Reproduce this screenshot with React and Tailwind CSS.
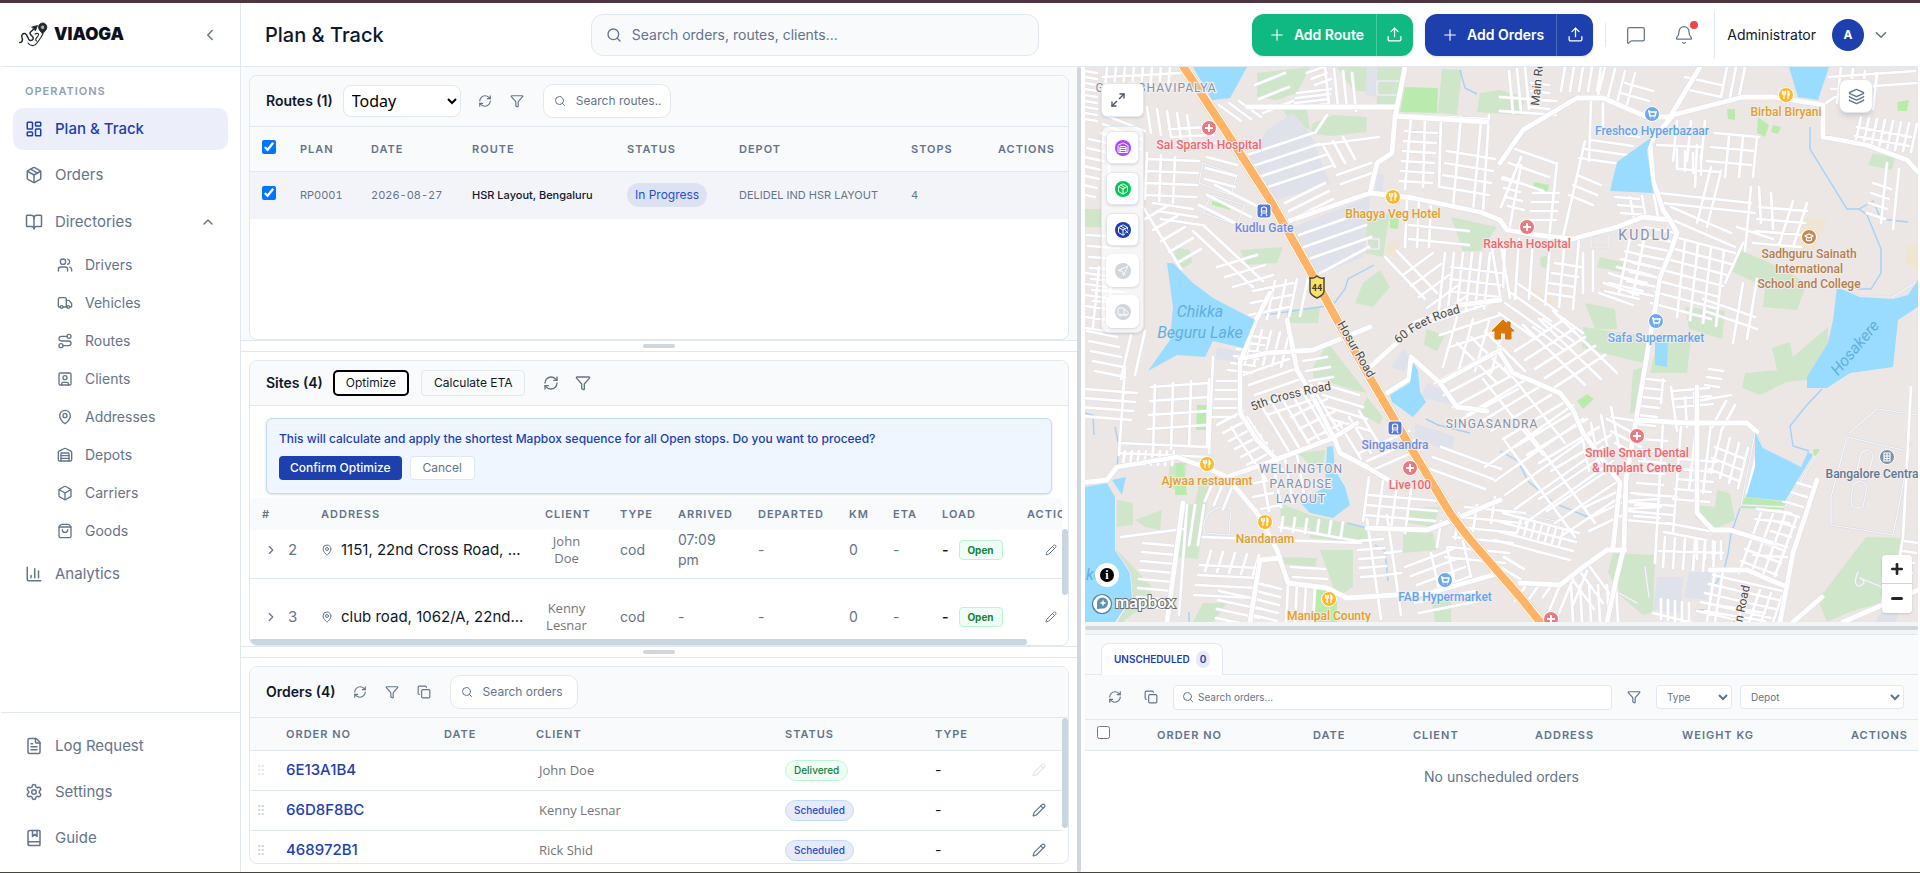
import {
  Bell,
  BookMarked,
  BookOpen,
  Box,
  ChevronDown,
  ChevronLeft,
  ChevronRight,
  ChevronUp,
  Copy,
  FileText,
  Funnel,
  GripVertical,
  Layers,
  LayoutDashboard,
  MapPin,
  Maximize2,
  MessageSquare,
  Navigation,
  Package,
  PackageX,
  Pencil,
  Plus,
  RefreshCw,
  Route,
  Search,
  Settings,
  ShoppingBag,
  SquareUser,
  Truck,
  Upload,
  Users,
  Warehouse,
} from 'lucide-react';

const DIRECTORY_LINKS = [
  { label: 'Drivers', icon: Users },
  { label: 'Vehicles', icon: Truck },
  { label: 'Routes', icon: Route },
  { label: 'Clients', icon: SquareUser },
  { label: 'Addresses', icon: MapPin },
  { label: 'Depots', icon: Warehouse },
  { label: 'Carriers', icon: Box },
  { label: 'Goods', icon: ShoppingBag },
];

const FOOTER_LINKS = [
  { label: 'Log Request', icon: FileText },
  { label: 'Settings', icon: Settings },
  { label: 'Guide', icon: BookMarked },
];

const SITES = [
  {
    seq: 2,
    address: '1151, 22nd Cross Road, ...',
    client: 'John Doe',
    arrived: '07:09 pm',
    cell: 'h-[47px] border-b border-slate-200 pb-2',
  },
  {
    seq: 3,
    address: 'club road, 1062/A, 22nd...',
    client: 'Kenny Lesnar',
    arrived: '-',
    cell: 'h-[76px]',
  },
];

const ORDERS = [
  { no: '6E13A1B4', client: 'John Doe', status: 'Delivered' },
  { no: '66D8F8BC', client: 'Kenny Lesnar', status: 'Scheduled' },
  { no: '468972B1', client: 'Rick Shid', status: 'Scheduled' },
];

const TH = 'px-3 text-left text-[11px] font-semibold uppercase tracking-[1px] text-[#64748b]';

/* ---------- map data ---------- */

const WATER = [
  '108,0 162,0 145,31 127,33',
  '82,196 88,196 108,216 128,231 170,253 158,281 128,274 120,290 92,288 63,304 85,273 88,240',
  '0,420 22,416 30,430 30,483 45,506 47,530 30,555 0,555',
  '27,413 41,410 37,428',
  '328,296 333,303 335,325 341,335 328,350 307,335 305,328 325,316',
  '242,380 248,379 250,403 260,420 265,438 248,451 225,446 215,435 240,420',
  '567,70 562,83 568,126 525,124 532,95',
  '704,0 744,0 733,33 713,30',
  '752,220 775,230 808,232 823,228 833,213 833,240 813,253 808,300 765,306 742,321 722,321 722,310 743,276 748,253',
  '670,365 678,381 716,400 723,385 728,388 700,434 661,430 670,400',
  '570,270 583,273 582,300 570,298',
];

const PARKS = [
  '172,6 225,0 212,26 192,33 172,30',
  '192,36 222,43 225,63 208,56',
  '228,56 248,48 282,50 281,65 245,69 225,66',
  '252,0 282,0 288,26 268,23',
  '292,0 317,0 312,37 292,37',
  '357,2 377,3 372,48 353,46',
  '395,26 415,23 440,30 436,48 392,45',
  '282,150 305,146 298,190 280,186',
  '278,216 295,203 305,220 288,240 270,236',
  '366,150 412,160 395,184 378,184',
  '155,183 198,180 192,196 162,198',
  '88,180 105,183 107,196 95,203',
  '0,142 16,142 16,160 0,160',
  '202,243 235,240 233,256 202,256',
  '243,276 282,326 268,323 228,310 228,300',
  '282,330 298,350 295,358 275,346',
  '341,262 360,268 352,284 339,278',
  '212,386 240,383 238,403 228,400',
  '85,396 102,396 98,425 82,420',
  '115,413 125,416 113,492 93,490 98,440 110,436',
  '195,436 225,448 225,461 196,458',
  '225,448 282,461 283,476 225,471',
  '32,433 48,436 48,458 32,460',
  '50,453 77,443 75,463 60,460',
  '32,483 67,520 65,533 38,555 30,555 47,530',
  '235,483 268,483 268,520 252,530',
  '198,490 232,491 230,500 198,497',
  '325,441 355,440 348,460 323,456',
  '318,463 348,466 352,483 318,486',
  '118,536 142,536 128,555 108,555',
  '346,530 366,532 366,555 350,555',
  '515,190 542,196 540,206 512,200',
  '455,190 467,188 463,202 456,200',
  '655,183 685,196 722,216 712,243 678,240 680,220 643,203',
  '788,86 810,91 807,103 783,98',
  '498,260 565,270 558,296 497,281',
  '500,236 530,242 532,262 510,262',
  '575,266 606,273 602,306 565,306',
  '600,240 640,244 637,272 604,262',
  '548,303 558,300 550,346 545,346',
  '687,281 705,275 708,290 743,260 743,276 722,313 702,315 675,328 657,321 660,306 692,303',
  '632,423 645,426 650,453 628,463 610,450 609,438 630,440',
  '528,486 570,488 568,546 558,548 532,526 523,505',
  '781,470 818,471 816,486 795,536 762,546 742,555 733,533',
];

const GARDENS = [
  '320,20 353,21 352,46 315,45',
  '112,338 128,338 127,363 111,363',
  '91,396 98,396 102,428 90,428',
  '230,523 252,523 252,555 227,555',
  '660,430 702,435 698,443 655,441',
  '492,334 502,327 509,332 498,342',
  '673,50 684,58 680,70 672,66',
  '642,42 650,42 650,53 643,52',
  '688,58 696,60 693,67 686,65',
  '449,115 464,118 463,124 448,122',
  '305,151 314,151 313,162 305,161',
  '728,382 735,382 729,392',
  '812,35 824,33 822,44 813,44',
  '127,134 146,139 145,143 127,138',
];

const CAMPUSES = [
  '208,46 225,66 245,116 192,133 162,93 182,63',
  '208,160 285,130 278,190 228,210',
  '282,0 292,0 291,30 280,28',
  '292,107 299,107 297,128 290,126',
  '132,280 165,286 162,296 130,292',
  '318,282 325,290 320,305 306,300',
  '342,316 370,330 366,338 336,330',
  '330,356 370,370 366,386 330,370',
  '572,510 598,510 596,546 568,543',
  '604,505 627,505 622,533 599,530',
  '800,540 820,534 810,555 790,555',
];

const SANDS = [
  '717,150 742,153 728,186 708,181',
  '228,0 244,2 240,10 226,6',
  '304,174 315,174 312,190 301,186',
  '445,222 469,232 467,240 443,232',
  '822,180 833,175 833,205 820,195',
  '368,434 380,434 374,440',
];

const STREAMS = [
  'M725 60v22l37 60h12l14-8 8 18 27 3',
  'M774 142l8 6 14 34v24l-10 16h-12l-20-6',
  'M737 322l-16 17-16 20 3 20 16 5',
  'M655 441l-9 26-3 20-4 16-12 20-4 20h-13',
  'M30 360l4 20-2 20',
  'M0 346l8 2 1 20',
  'M180 248l68-10 12-16 3-10 26-14',
  'M415 384l18 10 10 20 26 22 34 14',
  'M262 456l20 5M290 478l10 6 3 30',
  'M104 545v10M375 3l5 18 12 6',
  'M341 352l12 6 32 8',
];

// [x, y, dx, dy, count, stepX, stepY]: a run of parallel streets
const STREETS = [
  [0, 4, 12, 2, 9, 0, 6],
  [18, 10, 78, -4, 2, 2, 14],
  [22, 0, -2, 22, 8, 9, 0],
  [20, 48, 40, 16, 3, -2, 9],
  [62, 40, 4, 26, 5, 10, 2],
  [84, 62, 40, -2, 3, 4, 8],
  [134, 38, 22, 16, 3, 10, -2],
  [4, 72, 18, 4, 7, -2, 9],
  [22, 66, 4, 70, 1, 0, 0],
  [62, 86, -2, 46, 3, 14, 2],
  [62, 92, 52, 2, 4, -1, 12],
  [68, 136, 40, 6, 3, 4, 8],
  [2, 168, 32, 2, 7, 1, 11],
  [58, 140, 38, 62, 1, 0, 0],
  [60, 152, 24, -14, 5, 8, 11],
  [118, 158, 60, 56, 2, -10, 6],
  [130, 118, 44, 22, 3, -8, 10],
  [122, 90, 30, 8, 3, -1, 11],
  [132, 200, 40, -12, 3, 8, 10],
  [168, 224, 40, -8, 3, -2, 12],
  [190, 214, -8, 38, 4, 11, -1],
  [0, 206, 22, 3, 6, 0, 11],
  [14, 200, -6, 60, 2, 14, 0],
  [2, 264, 30, 6, 5, 2, 10],
  [46, 268, -10, 44, 2, 14, -4],
  [0, 322, 52, 4, 4, -2, 9],
  [40, 300, -6, 88, 1, 0, 0],
  [66, 320, 58, -4, 4, -1, 14],
  [70, 318, -2, 66, 4, 18, -2],
  [34, 376, 88, 4, 2, 0, 10],
  [40, 384, -2, 14, 8, 7, 0],
  [128, 290, -4, 96, 1, 0, 0],
  [132, 314, 22, 0, 5, -1, 9],
  [158, 268, 24, 3, 6, -3, 7],
  [168, 262, -8, 34, 5, 9, 1],
  [158, 308, 46, -16, 5, 6, 10],
  [132, 358, 26, -14, 6, 6, 8],
  [162, 350, 36, 54, 2, -16, 10],
  [176, 338, 30, 50, 6, 10, -4],
  [206, 350, 36, -18, 3, 8, 12],
  [218, 294, 24, -4, 3, 3, 10],
  [234, 316, 40, 12, 4, 4, 12],
  [254, 356, 22, 36, 3, 10, -6],
  [274, 386, 50, -22, 3, 8, 8],
  [284, 410, -6, 44, 4, 14, 4],
  [284, 428, 70, 6, 3, -2, 10],
  [148, 418, -10, 24, 3, -9, -4],
  [160, 418, 20, -4, 3, 8, 12],
  [176, 400, 8, 44, 4, 12, -4],
  [194, 460, 78, 14, 1, 0, 0],
  [196, 464, 2, -14, 6, 12, 1],
  [118, 470, 158, 6, 1, 0, 0],
  [36, 470, 62, -8, 1, 0, 0],
  [58, 476, 34, 3, 8, -1, 9],
  [102, 438, -8, 110, 1, 0, 0],
  [110, 438, -6, 40, 2, 9, 0],
  [115, 498, 60, 3, 4, -2, 10],
  [126, 484, -6, 20, 5, 12, 1],
  [134, 524, 42, 9, 4, -1, 9],
  [172, 516, 24, 6, 5, -1, 8],
  [203, 518, -2, 38, 4, 9, 0],
  [206, 500, 34, 2, 2, 2, 10],
  [272, 474, 26, -2, 5, 1, 9],
  [282, 452, 14, 100, 2, 20, -4],
  [300, 486, 16, -2, 3, 0, 22],
  [320, 500, 48, -18, 4, 6, 9],
  [346, 486, 8, 36, 3, 16, -6],
  [330, 536, 60, -12, 2, 4, 10],
  [356, 454, -4, 26, 4, 18, -8],
  [380, 440, 60, 6, 6, -4, 10],
  [340, 400, 60, 22, 3, 8, -10],
  [170, 18, 30, -12, 3, 4, 14],
  [212, 26, 34, -4, 4, -1, 5],
  [240, 0, 4, 38, 4, 9, 2],
  [222, 6, 16, -6, 3, 4, 6],
  [230, 66, 12, -18, 1, 0, 0],
  [232, 78, 62, -8, 1, 0, 0],
  [162, 88, 66, -22, 4, 6, 11],
  [238, 78, 12, 22, 3, 10, -4],
  [252, 108, 34, -12, 2, 4, 9],
  [200, 136, 40, -20, 3, 4, 8],
  [214, 168, 62, -22, 3, 5, 12],
  [228, 210, 56, -30, 1, 0, 0],
  [320, 64, 32, 2, 6, -1, 10],
  [326, 50, -6, 72, 1, 0, 0],
  [340, 50, -2, 70, 2, 16, 0],
  [316, 48, 88, 4, 1, 0, 0],
  [376, 50, -8, 90, 2, 20, 4],
  [362, 84, 48, 8, 4, -2, 12],
  [404, 48, -6, 96, 1, 0, 0],
  [322, 134, -2, 46, 3, 12, 0],
  [324, 158, 60, 6, 2, 0, 14],
  [300, 190, 40, 42, 2, 12, -6],
  [318, 208, 30, -22, 5, 8, 11],
  [360, 186, -6, 56, 6, 9, 0],
  [366, 200, 50, 6, 3, -1, 12],
  [406, 176, 10, 58, 2, 9, -3],
  [345, 256, 60, -20, 3, 10, 12],
  [372, 250, -14, 50, 4, 16, 2],
  [372, 276, 40, 40, 3, 14, -6],
  [350, 316, 56, -30, 4, 9, 12],
  [382, 348, 60, -36, 8, 12, 8],
  [420, 300, 60, 76, 2, -22, 12],
  [438, 258, 62, 60, 3, 16, -6],
  [430, 284, 50, -32, 5, 10, 9],
  [468, 244, 30, 22, 3, -10, 8],
  [400, 400, 88, -62, 5, 10, 14],
  [440, 360, 70, 96, 2, -20, 14],
  [454, 432, 60, -40, 4, 8, 12],
  [418, 446, 76, 20, 4, -3, 9],
  [436, 452, -4, 14, 7, 7, 2],
  [500, 440, 34, -16, 3, 2, 12],
  [474, 520, -14, 34, 3, 14, -8],
  [486, 518, 2, 36, 6, 9, 0],
  [505, 500, 22, 30, 3, -9, 6],
  [415, 30, 56, 4, 2, 0, 14],
  [440, 0, 4, 42, 3, -8, 2],
  [446, 16, 18, 2, 4, 0, 8],
  [480, 0, -4, 24, 5, 9, 0],
  [520, 0, -8, 32, 4, 10, 2],
  [536, 26, 28, 8, 2, 4, -10],
  [506, 34, -2, 60, 1, 0, 0],
  [518, 36, 0, 26, 1, 0, 0],
  [512, 64, 42, 6, 4, -6, 9],
  [430, 82, 40, 14, 3, -6, 14],
  [472, 96, -8, 76, 1, 0, 0],
  [500, 74, -22, 96, 1, 0, 0],
  [492, 108, 24, 10, 3, -4, 10],
  [448, 126, 26, 0, 4, -1, 9],
  [417, 112, 16, 4, 4, 2, 9],
  [416, 140, 20, -50, 1, 0, 0],
  [436, 98, -12, 66, 1, 0, 0],
  [530, 130, 24, 2, 3, 3, 8],
  [545, 130, 4, 22, 3, 12, -1],
  [572, 78, 44, 2, 1, 0, 0],
  [592, 82, 0, 20, 4, 8, 2],
  [594, 102, 42, 3, 1, 0, 0],
  [636, 104, -14, 56, 2, -10, -4],
  [574, 126, 92, 10, 2, 4, 10],
  [612, 78, -2, 42, 1, 0, 0],
  [586, 140, 60, 26, 2, 4, 14],
  [666, 120, -6, 64, 1, 0, 0],
  [674, 140, 48, 4, 4, -2, 12],
  [674, 120, 2, 36, 2, 12, 6],
  [722, 136, -14, 44, 2, -14, -2],
  [642, 0, -6, 30, 3, 9, 0],
  [600, 10, 36, 8, 2, 0, 12],
  [592, 54, -4, 40, 3, 14, 0],
  [622, 94, 44, 4, 3, 4, -14],
  [644, 70, -4, 40, 3, 14, 0],
  [744, 10, 86, -6, 2, 2, 12],
  [756, 0, -4, 36, 4, 12, 2],
  [776, 50, -6, 28, 8, 8, 1],
  [772, 60, 54, 10, 2, -2, 9],
  [802, 96, -6, 60, 2, 12, 6],
  [788, 116, 18, 6, 4, -2, 10],
  [738, 38, 12, -8, 1, 0, 0],
  [560, 160, 30, 6, 8, -3, 9],
  [546, 166, -12, 60, 2, 14, 2],
  [540, 184, 34, 8, 6, -4, 8],
  [524, 206, 34, 12, 3, -5, 10],
  [494, 172, -6, 70, 3, -14, -2],
  [470, 196, 26, 4, 4, -3, 10],
  [508, 184, 0, 40, 2, -10, 2],
  [420, 176, -2, 44, 1, 0, 0],
  [434, 172, -4, 60, 2, 14, 0],
  [432, 216, 40, 28, 4, -6, 10],
  [590, 170, 60, 16, 7, -4, 11],
  [600, 174, -8, 76, 4, 13, 3],
  [652, 160, 36, 12, 1, 0, 0],
  [658, 176, -18, 40, 1, 0, 0],
  [618, 232, 52, 18, 2, 2, 12],
  [672, 212, -10, 60, 2, -14, 4],
  [562, 312, 18, 2, 6, -2, 9],
  [578, 312, -2, 24, 1, 0, 0],
  [588, 324, 36, -3, 3, 2, 8],
  [586, 320, 6, 44, 1, 0, 0],
  [600, 330, 2, 30, 2, 9, -4],
  [624, 302, 14, 2, 3, -2, 8],
  [612, 334, 34, -6, 1, 0, 0],
  [650, 338, -14, 26, 2, -9, -4],
  [552, 354, -26, -4, 1, 0, 0],
  [526, 340, 8, 40, 4, -10, 8],
  [522, 352, 30, 16, 3, 4, 12],
  [556, 372, 26, 2, 8, -1, 11],
  [578, 356, -8, 140, 1, 0, 0],
  [596, 360, -8, 106, 1, 0, 0],
  [626, 356, -8, 70, 2, -14, -3],
  [596, 392, 36, 3, 5, -2, 10],
  [636, 366, -10, 40, 5, 9, 5],
  [630, 380, 30, 12, 3, -3, 11],
  [546, 426, 46, 4, 4, -2, 9],
  [582, 456, 42, 8, 2, -3, 9],
  [574, 484, 64, 2, 1, 0, 0],
  [580, 470, -2, 30, 6, 10, 1],
  [612, 474, 0, 18, 4, 8, 0],
  [540, 434, 34, -2, 2, 0, 8],
  [672, 442, 34, 4, 2, -2, 10],
  [676, 446, -22, 60, 4, 12, 1],
  [664, 470, 36, 14, 3, -4, 12],
  [706, 414, 20, 6, 7, -4, 10],
  [668, 488, 34, 2, 1, 0, 0],
  [628, 508, 70, 16, 5, -4, 9],
  [630, 504, -8, 50, 2, 8, 0],
  [664, 520, -12, 35, 4, 11, 3],
  [604, 536, 0, 20, 5, -7, -1],
  [620, 544, 60, 10, 2, 0, -8],
  [568, 546, 40, 10, 1, 0, 0],
  [820, 474, 13, 2, 4, -2, 10],
  [818, 470, -10, 60, 1, 0, 0],
  [826, 320, -8, 150, 1, 0, 0],
  [415, 500, 20, 12, 2, 4, -10],
  [440, 520, -10, 14, 3, 14, -2],
];

const AVENUES = [
  'M198 156l87-30 43 5 67 14 20 8 7 10 30 5 35 4 45-12 26-10 27 3 7 13-7 20-10 24-5 33-2 10-17 100-10 60-2 67-8 33-9 42',
  'M320 0l-10 50-3 36-15 10-7 30',
  'M162 40h148M310 49l92 6',
  'M415 96l23-33 54-32h26l44 19h23l30-50',
  'M588 48l70-18h30l50 8v32l44 8 40 15 11 12',
  'M588 48l-23 28 3 37 10 30 7 10',
  'M-5 416l27-3 10-13 60-10 30 11 20 9 40-14 66-25 24-15',
  'M185 226l-15 29-15 41v50l17 27 20 20',
  'M202 253l10 50 16 27 22 43 5 13 27 14 33 20',
  'M142 410l30 36 20 37 11 33 39 5 20 10 83-5 70-20',
  'M285 300l30-27 15-17 45-18 40-5',
  'M155 292l27-6 46-3 57-23',
  'M302 326l22-14 2-22 29 26 17 24 30 4M355 316l60-33',
  'M415 286l13 20 47 20 13 17 10 23 20 27 17 23-7 64',
  'M282 461l60 2 26-10 47-20',
  'M435 516l40 2 23-18 24-17h18',
  'M612 320v126l16 17h17l42 13',
  'M552 353l50 3h60l10 9',
  'M732 413l-24 73-13 69',
  'M98 436L82 555M195 491l-20 2-10 62',
  'M625 503h37l40 17M708 555l29-25',
  'M758 555l75-32',
];

const LANES = [
  'M118 96l34 12-6 20-32-12z',
  'M126 128l34 10-8 20-34-12z',
  'M124 446q12-10 22-4l-2 26-24-2q-4-10 4-20z',
  'M292 14h24v14h-24z',
  'M282 172h12v10h-12z',
  'M506 168h18v12h-18z',
  'M766 366h-2l28-24 41 6M762 370l60 14M762 370l-16 60v28l62 10 18-90',
  'M776 386q10-8 12 4l-6 22q-10 2-10-8zM768 418q10-8 14 2l-4 20q-12 4-12-6z',
  'M670 366l10 18 36 16 8-14 6 4-30 50-44-2z',
  'M752 220l23 10h33l25-16',
  'M30 430v53l15 23 2 24-16 25',
  'M773 505q-6 14 2 14 8-4 0-8l24 10-4 20',
  'M560 500l4 30M534 526l18 10M430 445l44 10v6l-44-10z',
];

const HIGHWAY =
  'M96 -4L142 66L185 133L232 216L252 253L288 316L323 376L365 446Q378 464 388 476L435 530L459 560';

function streetPath() {
  const parts = [];
  for (const [x, y, dx, dy, count, sx, sy] of STREETS) {
    for (let i = 0; i < count; i += 1) {
      parts.push(`M${x + i * sx} ${y + i * sy}l${dx} ${dy}`);
    }
  }
  return parts.join('');
}

const POIS = [
  { kind: 'hospital', x: 124, y: 61, lines: ['Sai Sparsh Hospital'] },
  { kind: 'hospital', x: 442, y: 160, lines: ['Raksha Hospital'] },
  { kind: 'hospital', x: 325, y: 401, lines: ['Live100'] },
  { kind: 'hospital', x: 552, y: 369, lines: ['Smile Smart Dental', '& Implant Centre'] },
  { kind: 'hospital', x: 466, y: 552, lines: [] },
  { kind: 'metro', x: 179, y: 144, lines: ['Kudlu Gate'] },
  { kind: 'metro', x: 310, y: 361, lines: ['Singasandra'] },
  { kind: 'food', x: 308, y: 130, lines: ['Bhagya Veg Hotel'] },
  { kind: 'food', x: 122, y: 397, lines: ['Ajwaa restaurant'] },
  { kind: 'food', x: 180, y: 455, lines: ['Nandanam'] },
  { kind: 'food', x: 244, y: 532, lines: ['Manipal County'] },
  { kind: 'food', x: 701, y: 28, lines: ['Birbal Biryani'] },
  { kind: 'shop', x: 360, y: 513, lines: ['FAB Hypermarket'] },
  { kind: 'shop', x: 567, y: 47, lines: ['Freshco Hyperbazaar'] },
  { kind: 'shop', x: 571, y: 254, lines: ['Safa Supermarket'] },
  {
    kind: 'school',
    x: 724,
    y: 170,
    lines: ['Sadhguru Sainath', 'International', 'School and College'],
  },
  { kind: 'office', x: 802, y: 390, labelX: 787, lines: ['Bangalore Centra'] },
];

const POI_COLORS = {
  hospital: { icon: '#ea7a80', text: '#ee6870' },
  metro: { icon: '#5779d8', text: '#6f8be6' },
  food: { icon: '#fdb92e', text: '#dfa02c' },
  shop: { icon: '#6caaf0', text: '#62a4ee' },
  school: { icon: '#c68a50', text: '#b47f4d' },
  office: { icon: '#7d93ab', text: '#5f7894' },
};

const POI_GLYPHS = {
  hospital: <path d="M0 -4V4M-4 0H4" strokeWidth="2" />,
  metro: <path d="M-2.5 2V-2Q-2.5 -4 0 -4T2.5 -2V2ZM-2.5 0H2.5M-2 3L-3 5M2 3L3 5" />,
  food: <path d="M-2 -4V4M-3.5 -4V-1H-0.5V-4M2 4V-4Q3.5 -3 3.2 0H2" />,
  shop: <path d="M-4 -3H-3L-2 2H3L4 -2H-2.5M-1.5 4H-1M2 4H2.5" strokeWidth="1.6" />,
  school: <path d="M-4 -1L0 -3L4 -1L0 1ZM-2.5 0.5V3Q0 4.500 2.500 3V0.500" />,
  office: <path d="M-3 -4H3V4H-3ZM0 -4V4M-3 -1H3M-3 1.500H3" />,
};

function Poi({ poi }) {
  const colors = POI_COLORS[poi.kind];
  return (
    <g>
      {poi.kind === 'metro' ? (
        <rect x={poi.x - 7} y={poi.y - 7} width="14" height="14" rx="3" fill={colors.icon} stroke="#fff" />
      ) : (
        <circle cx={poi.x} cy={poi.y} r="7.5" fill={colors.icon} stroke="#fff" />
      )}
      <g transform={`translate(${poi.x} ${poi.y})`} fill="none" stroke="#fff" strokeWidth="1.2">
        {POI_GLYPHS[poi.kind]}
      </g>
      {poi.lines.map((line, i) => (
        <text
          key={line}
          x={poi.labelX ?? poi.x}
          y={poi.y + 21 + i * 15}
          textAnchor="middle"
          fontSize="12"
          fontWeight="500"
          fill={colors.text}
          stroke="#f1eceb"
          strokeWidth="2"
          strokeLinejoin="round"
          style={{ paintOrder: 'stroke' }}
        >
          {line}
        </text>
      ))}
    </g>
  );
}

function CityMap() {
  const streets = streetPath();
  return (
    <svg
      viewBox="0 0 833 555"
      preserveAspectRatio="xMidYMid slice"
      className="absolute inset-0 h-full w-full font-['Roboto',sans-serif]"
      role="img"
      aria-label="Map of south Bengaluru"
    >
      <rect width="833" height="555" fill="#ece7e5" />
      {PARKS.map((p) => (
        <polygon key={p} points={p} fill="#d0e6cb" />
      ))}
      {GARDENS.map((p) => (
        <polygon key={p} points={p} fill="#baebad" />
      ))}
      {CAMPUSES.map((p) => (
        <polygon key={p} points={p} fill="#dfe1eb" />
      ))}
      {SANDS.map((p) => (
        <polygon key={p} points={p} fill="#f0e5d2" />
      ))}
      <g fill="none" stroke="#a5d1f8" strokeWidth="1.4">
        {STREAMS.map((d) => (
          <path key={d} d={d} />
        ))}
      </g>
      <g fill="none" strokeLinecap="round" strokeLinejoin="round">
        <path d={streets} stroke="#dfe0ea" strokeWidth="3.600" />
        <path d={LANES.join('')} stroke="#d9dbe6" strokeWidth="2.400" />
        <path d={streets} stroke="#fff" strokeWidth="2.700" />
        <path d={LANES.join('')} stroke="#f8f7f7" strokeWidth="1.200" />
      </g>
      <g fill="none" strokeLinecap="round" strokeLinejoin="round">
        <path d={AVENUES.join('')} stroke="#dcdde8" strokeWidth="5.700" />
        <path d={AVENUES.join('')} stroke="#fff" strokeWidth="4.800" />
      </g>
      {WATER.map((p) => (
        <polygon key={p} points={p} fill="#9adcff" />
      ))}
      <g fill="none" strokeLinejoin="round">
        <path d={HIGHWAY} stroke="#e3d9b4" strokeWidth="11" />
        <path d={HIGHWAY} stroke="#fff" strokeWidth="10" />
        <path d={HIGHWAY} stroke="#ffb366" strokeWidth="8" />
      </g>

      <g stroke="#f3efed" strokeWidth="2.500" strokeLinejoin="round" style={{ paintOrder: 'stroke' }}>
        <g fill="#8492b4" fontSize="12" textAnchor="middle" letterSpacing="1">
          <text x="71" y="25">GARVEBHAVIPALYA</text>
          <text x="560" y="173" fontSize="14" letterSpacing="2">KUDLU</text>
          <text x="407" y="361">SINGASANDRA</text>
          <text x="216" y="406">WELLINGTON</text>
          <text x="216" y="421">PARADISE</text>
          <text x="216" y="436">LAYOUT</text>
        </g>
        <g fill="#4a4a4a" fontSize="12">
          <text transform="translate(252 257) rotate(60)">Hosur Road</text>
          <path id="sixty-feet" d="M314 277Q336 254 390 242" fill="none" stroke="none" />
          <text>
            <textPath href="#sixty-feet">60 Feet Road</textPath>
          </text>
          <path id="fifth-cross" d="M168 344Q200 330 262 320" fill="none" stroke="none" />
          <text>
            <textPath href="#fifth-cross">5th Cross Road</textPath>
          </text>
          <text transform="translate(454 39) rotate(-84)">Main Road</text>
          <text transform="translate(653 575) rotate(-78)">Main Road</text>
        </g>
      </g>

      <g fill="#5fb0e0" fontSize="16" fontStyle="italic" textAnchor="middle">
        <text x="115" y="250">Chikka</text>
        <text x="115" y="271">Beguru Lake</text>
        <text transform="translate(774 284) rotate(-50)">Hosakere</text>
        <text x="1" y="513" textAnchor="start">ke</text>
      </g>

      {POIS.map((poi) => (
        <Poi key={`${poi.x}-${poi.y}`} poi={poi} />
      ))}

      <path
        d="M225 211q4 1 7-2 3 3 7 2v13q0 4-7 7-7-3-7-7z"
        fill="#ffe066"
        stroke="#4b4b3a"
        strokeWidth="1.500"
      />
      <text x="232" y="224" textAnchor="middle" fontSize="9" fontWeight="700" fill="#3c3c30">
        44
      </text>
      <path
        d="M418 253L407 264H410V272H415.500V266H420.500V272H426V264H429L425 260V255H422V257Z"
        fill="#d97706"
        stroke="#d97706"
        strokeWidth="1"
        strokeLinejoin="round"
      />
    </svg>
  );
}

function MapPanel() {
  const layers = [
    { label: 'Depots', icon: Warehouse, color: 'bg-purple-500' },
    { label: 'Scheduled orders', icon: Package, color: 'bg-green-500' },
    { label: 'Unscheduled orders', icon: PackageX, color: 'bg-[#1e40af]' },
    { label: 'Drivers', icon: Navigation, color: 'bg-gray-300', disabled: true },
    { label: 'Vehicles', icon: Truck, color: 'bg-gray-300', disabled: true },
  ];
  return (
    <section className="relative min-h-0 overflow-hidden bg-[#ece7e5]" aria-label="Map">
      <CityMap />
      <button
        type="button"
        aria-label="Expand map"
        className="absolute top-4 left-4 flex h-[34px] w-[43px] items-center rounded-md border border-slate-200 bg-white pl-2 text-slate-600 shadow-sm"
      >
        <Maximize2 size={16} strokeWidth={2} />
      </button>
      <div className="absolute top-[59px] left-4 flex w-[43px] flex-col items-center gap-2 rounded-lg border border-slate-200 bg-white/60 py-1 shadow-sm">
        {layers.map(({ label, icon: Icon, color, disabled }) => (
          <button
            key={label}
            type="button"
            aria-label={label}
            disabled={disabled}
            className="flex h-[33px] w-[33px] items-center justify-center rounded-md border border-slate-200 bg-white shadow-sm disabled:border-white"
          >
            <span className={`flex h-4 w-4 items-center justify-center rounded-full text-white ${color}`}>
              <Icon size={12} strokeWidth={2} />
            </span>
          </button>
        ))}
      </div>
      <button
        type="button"
        aria-label="Map layers"
        className="absolute top-3 right-[45px] flex h-[34px] w-[34px] items-center justify-center rounded-lg border border-slate-200 bg-white text-slate-500 shadow-md"
      >
        <Layers size={17} strokeWidth={2} />
      </button>
      <div className="absolute right-[6px] bottom-[9px] flex w-[30px] flex-col divide-y divide-gray-300 rounded bg-white shadow">
        <button type="button" aria-label="Zoom in" className="flex h-[29px] items-center justify-center text-neutral-800">
          <Plus size={16} strokeWidth={4} />
        </button>
        <button type="button" aria-label="Zoom out" className="flex h-[29px] items-center justify-center">
          <span className="h-[3px] w-3 rounded-full bg-neutral-800" />
        </button>
      </div>
      <button
        type="button"
        aria-label="Attribution"
        className="absolute bottom-[35px] left-[10px] flex h-6 w-6 items-center justify-center rounded-full bg-white"
      >
        <span className="flex h-[14px] w-[14px] items-center justify-center rounded-full bg-black font-['Liberation_Serif',serif] text-xs font-bold text-white">
          i
        </span>
      </button>
      <a href="#mapbox" aria-label="Mapbox" className="absolute bottom-2 left-[7px]">
        <svg width="90" height="24" viewBox="0 0 90 24">
          <circle cx="10" cy="14" r="9.500" fill="#fff" stroke="#4f7e96" strokeWidth="1.200" />
          <path d="M5 19V13A5.500 5.500 0 1 1 10.500 18.500Z" fill="#5d92ad" />
          <path d="M11 9.500L12 12L14.500 13L12 14L11 16.500L10 14L7.500 13L10 12Z" fill="#fff" />
          <text
            x="23"
            y="18"
            fontSize="17"
            fontWeight="700"
            fill="#fff"
            stroke="#6d6d6d"
            strokeWidth="2"
            style={{ paintOrder: 'stroke' }}
            className="font-['Lato',sans-serif]"
          >
            mapbox
          </text>
        </svg>
      </a>
    </section>
  );
}

/* ---------- shell ---------- */

function Logo() {
  return (
    <a href="#home" className="flex items-center gap-[6px]" aria-label="Viaoga home">
      <svg width="29" height="26" viewBox="0 0 29 26" fill="none" stroke="#1f2430" strokeLinecap="round" strokeLinejoin="round">
        <path d="M0.800 20.500C3.500 20.500 4 17.500 3 15.500C2 13 4 11 6 11.500C9 12.500 8.500 18 11 18.500C13.500 19 15.500 16.500 13.500 14.500C11 12.500 10 11 12 9.500L15 7" strokeWidth="1.500" />
        <path d="M9 21C11 24.500 16 24.500 18 21C20 18 22 16 23.600 12.500M16 12C19 10.500 20.500 12 19 14C17.500 16 15.500 17.500 17.500 19" strokeWidth="1.100" />
        <path d="M13 5L18.500 3.500L16.500 8.500Z" fill="#1f2430" strokeWidth="0.800" />
        <path d="M23.600 12C22 9.500 19.500 8 19.500 5.200A4.200 4.200 0 0 1 27.900 5.200C27.900 8 25.200 9.500 23.600 12Z" fill="#1f2430" strokeWidth="0.800" />
        <circle cx="23.700" cy="5.300" r="2.200" fill="#aab0b8" strokeWidth="0.800" />
      </svg>
      <span className="text-[17px] font-black text-[#0b101c]">VIAOGA</span>
    </a>
  );
}

function AnalyticsIcon() {
  return (
    <svg
      width="18"
      height="18"
      viewBox="0 0 24 24"
      fill="none"
      stroke="currentColor"
      strokeWidth="2"
      strokeLinecap="round"
      strokeLinejoin="round"
    >
      <path d="M3 3v16a2 2 0 0 0 2 2h16M8 17v-3M13 17V5M18 17V8" />
    </svg>
  );
}

const NAV_ITEM = 'flex h-[42px] items-center gap-3 rounded-[10px] px-3 text-[15px]';

function Sidebar() {
  return (
    <aside className="flex w-60 shrink-0 flex-col border-r border-slate-200 bg-white">
      <div className="flex h-16 shrink-0 items-center justify-between border-b border-slate-200 pr-[21px] pl-[18px]">
        <Logo />
        <button type="button" aria-label="Collapse sidebar" className="text-[#64748b]">
          <ChevronLeft size={18} strokeWidth={2} />
        </button>
      </div>

      <nav className="flex flex-1 flex-col px-3 pt-4" aria-label="Main">
        <p className="mb-2 px-3 text-[11px] leading-[17px] font-semibold tracking-[1px] text-slate-400">
          OPERATIONS
        </p>
        <a href="#plan" className={`${NAV_ITEM} mb-1 bg-[#eceff9] font-medium text-[#1e40af]`}>
          <LayoutDashboard size={18} />
          Plan &amp; Track
        </a>
        <a href="#orders" className={`${NAV_ITEM} mb-[5px] text-[#64748b]`}>
          <Package size={18} />
          Orders
        </a>
        <button type="button" className={`${NAV_ITEM} text-[#64748b]`}>
          <BookOpen size={18} />
          <span className="flex-1 text-left">Directories</span>
          <ChevronUp size={16} />
        </button>
        <ul className="my-[3px]">
          {DIRECTORY_LINKS.map(({ label, icon: Icon }) => (
            <li key={label}>
              <a
                href={`#${label.toLowerCase()}`}
                className="flex h-[38px] items-center gap-3 pl-11 text-sm text-[#64748b]"
              >
                <Icon size={16} />
                {label}
              </a>
            </li>
          ))}
        </ul>
        <a href="#analytics" className={`${NAV_ITEM} text-[#64748b]`}>
          <AnalyticsIcon />
          Analytics
        </a>
      </nav>

      <div className="flex flex-col gap-1 border-t border-slate-200 px-3 pt-3 pb-[13px]">
        {FOOTER_LINKS.map(({ label, icon: Icon }) => (
          <a key={label} href={`#${label}`} className={`${NAV_ITEM} text-[#64748b]`}>
            <Icon size={18} />
            {label}
          </a>
        ))}
      </div>
    </aside>
  );
}

function SplitButton({ label, color, divider }) {
  return (
    <div className={`flex h-[42px] overflow-hidden rounded-xl text-white shadow-sm ${color}`}>
      <button type="button" className="flex items-center gap-2 pr-3 pl-4 text-sm font-semibold">
        <Plus size={18} strokeWidth={1.5} />
        {label}
      </button>
      <button
        type="button"
        aria-label={`Import for ${label}`}
        className={`flex w-[37px] items-center justify-center border-l ${divider}`}
      >
        <Upload size={17} strokeWidth={1.8} />
      </button>
    </div>
  );
}

function TopBar() {
  return (
    <header className="flex h-16 shrink-0 items-center border-b border-slate-200 bg-white pr-7 pl-6">
      <h1 className="text-xl font-medium whitespace-nowrap text-slate-900">Plan &amp; Track</h1>
      <div className="flex flex-1 justify-center pr-[26px] pl-5">
        <label className="flex h-[42px] w-full max-w-md items-center gap-[10px] rounded-xl border border-slate-200 bg-slate-50 px-[14px] text-[#64748b]">
          <Search size={16} strokeWidth={2} />
          <input
            type="text"
            aria-label="Search"
            placeholder="Search orders, routes, clients..."
            className="min-w-0 flex-1 bg-transparent text-sm outline-none placeholder:text-[#64748b]"
          />
        </label>
      </div>
      <div className="flex items-center gap-3">
        <SplitButton label="Add Route" color="bg-[#10b981]" divider="border-[#4bcaa0]" />
        <SplitButton label="Add Orders" color="bg-[#1e40af]" divider="border-[#4a66bd]" />
        <span className="h-6 w-px bg-slate-200" />
        <button type="button" aria-label="Messages" className="flex h-9 w-9 items-center justify-center text-[#64748b]">
          <MessageSquare size={20} strokeWidth={1.5} />
        </button>
        <button
          type="button"
          aria-label="Notifications"
          className="relative flex h-9 w-9 items-center justify-center text-[#64748b]"
        >
          <Bell size={20} strokeWidth={1.5} />
          <span className="absolute top-1 right-1 h-2 w-2 rounded-full bg-[#ef4444]" />
        </button>
        <button
          type="button"
          className="flex h-12 items-center border-l border-slate-200 pl-3 text-sm text-slate-900"
        >
          Administrator
          <span className="mr-2 ml-4 flex h-8 w-8 items-center justify-center rounded-full bg-[#1e40af] text-xs font-bold text-white">
            A
          </span>
          <ChevronDown size={18} className="text-[#64748b]" strokeWidth={2} />
        </button>
      </div>
    </header>
  );
}

function SplitHandle() {
  return (
    <div role="separator" className="flex items-center justify-center border-y border-slate-200 bg-white">
      <span className="h-1 w-8 rounded-full bg-gray-300" />
    </div>
  );
}

function IconButton({ label, icon: Icon, size = 14 }) {
  return (
    <button type="button" aria-label={label} className="flex h-8 w-8 items-center justify-center text-[#64748b]">
      <Icon size={size} strokeWidth={2} />
    </button>
  );
}

function PanelSearch({ placeholder }) {
  return (
    <label className="ml-[10px] flex h-[34px] w-32 items-center gap-[10px] rounded-[10px] border border-slate-200 bg-white pr-1 pl-[10px] text-[#64748b]">
      <Search size={12} className="shrink-0" />
      <input
        type="text"
        aria-label={placeholder}
        placeholder={placeholder}
        className="w-full min-w-0 bg-transparent text-xs outline-none placeholder:text-[#64748b]"
      />
    </label>
  );
}

const CARD = 'flex h-full flex-col overflow-hidden rounded-lg border border-slate-200 bg-white';
const CARD_TITLE = 'text-sm font-semibold text-slate-900';

function RoutesPanel() {
  return (
    <section className="min-h-0 bg-slate-50 px-2 pt-2">
      <div className={CARD}>
        <div className="flex h-[51px] shrink-0 items-center border-b border-slate-200 bg-slate-50 px-4">
          <h2 className={CARD_TITLE}>Routes (1)</h2>
          <select
            aria-label="Date range"
            className="mr-2 ml-[10px] h-8 w-[118px] rounded-lg border border-slate-200 bg-white px-1 font-['Noto_Sans',sans-serif] text-base text-black"
          >
            <option>Today</option>
          </select>
          <IconButton label="Refresh routes" icon={RefreshCw} />
          <IconButton label="Filter routes" icon={Funnel} />
          <PanelSearch placeholder="Search routes.." />
        </div>
        <table className="w-full table-fixed">
          <colgroup>
            <col className="w-[38px]" />
            <col className="w-[71px]" />
            <col className="w-[101px]" />
            <col className="w-[155px]" />
            <col className="w-[112px]" />
            <col className="w-[172px]" />
            <col className="w-[87px]" />
            <col className="w-[82px]" />
          </colgroup>
          <thead>
            <tr className="h-11 border-b border-slate-200 bg-slate-50">
              <th className="pb-1 pl-3 text-left">
                <input type="checkbox" defaultChecked aria-label="Select all routes" className="block h-[14px] w-[14px]" />
              </th>
              <th className={TH}>Plan</th>
              <th className={TH}>Date</th>
              <th className={TH}>Route</th>
              <th className={TH}>Status</th>
              <th className={TH}>Depot</th>
              <th className={TH}>Stops</th>
              <th className={TH}>Actions</th>
            </tr>
          </thead>
          <tbody>
            <tr className="h-12 bg-[#f3f4fa] text-[11px] text-[#64748b]">
              <td className="pb-1 pl-3">
                <input type="checkbox" defaultChecked aria-label="Select RP0001" className="block h-[14px] w-[14px]" />
              </td>
              <td className="px-3 tabular-nums">RP0001</td>
              <td className="px-3 whitespace-nowrap tabular-nums">2026-08-27</td>
              <td className="px-3 font-medium whitespace-nowrap text-slate-900">HSR Layout, Bengaluru</td>
              <td className="px-3">
                <span className="inline-flex h-6 items-center rounded-full bg-[#dde2f2] px-2 text-xs whitespace-nowrap text-[#1d4ed8]">
                  In Progress
                </span>
              </td>
              <td className="px-3 whitespace-nowrap">DELIDEL IND HSR LAYOUT</td>
              <td className="px-3">4</td>
              <td />
            </tr>
          </tbody>
        </table>
      </div>
    </section>
  );
}

function SitesPanel() {
  return (
    <section className="min-h-0 bg-white px-2 pt-2">
      <div className={`${CARD} relative`}>
        <div className="flex h-[45px] shrink-0 items-center border-b border-slate-200 bg-slate-50 px-4">
          <h2 className={CARD_TITLE}>Sites (4)</h2>
          <button
            type="button"
            className="ml-[10px] h-[26px] rounded-[5px] border-2 border-black bg-white px-[11px] text-xs text-slate-900"
          >
            Optimize
          </button>
          <button
            type="button"
            className="mr-[10px] ml-3 h-[26px] rounded border border-slate-200 bg-slate-50 px-3 text-xs text-slate-900"
          >
            Calculate ETA
          </button>
          <IconButton label="Refresh sites" icon={RefreshCw} size={16} />
          <IconButton label="Filter sites" icon={Funnel} size={16} />
        </div>
        <div className="mx-4 mt-3 mb-1 h-[76px] shrink-0 rounded-md border border-blue-200 bg-[#eff6ff] px-3 pt-3 shadow-sm">
          <p className="text-xs font-medium text-[#1e40af]">
            This will calculate and apply the shortest Mapbox sequence for all Open stops. Do you want to proceed?
          </p>
          <div className="mt-[9px] flex gap-2">
            <button type="button" className="h-6 rounded bg-[#1e40af] px-[11px] text-xs font-medium text-white">
              Confirm Optimize
            </button>
            <button
              type="button"
              className="h-6 rounded border border-slate-200 bg-white px-3 text-xs text-[#64748b]"
            >
              Cancel
            </button>
          </div>
        </div>
        <div className="mr-[6px] min-h-0 flex-1 overflow-hidden">
          <table className="w-full min-w-[855px] table-fixed">
            <colgroup>
              <col className="w-[59px]" />
              <col className="w-[224px]" />
              <col className="w-[75px]" />
              <col className="w-[58px]" />
              <col className="w-[80px]" />
              <col className="w-[91px]" />
              <col className="w-[44px]" />
              <col className="w-[49px]" />
              <col className="w-[85px]" />
              <col className="w-[90px]" />
            </colgroup>
            <thead>
              <tr className="h-8 bg-slate-50">
                {['#', 'Address', 'Client', 'Type', 'Arrived', 'Departed', 'Km', 'Eta', 'Load', 'Actions'].map(
                  (heading) => (
                    <th key={heading} className={TH}>
                      {heading}
                    </th>
                  ),
                )}
              </tr>
            </thead>
            <tbody className="text-sm text-[#64748b]">
              {SITES.map((site) => (
                <tr key={site.seq}>
                  <td className={`pl-[14px] text-[15px] ${site.cell}`}>
                    <span className="flex items-center gap-[10px]">
                      <ChevronRight size={14} />
                      {site.seq}
                    </span>
                  </td>
                  <td className={`pl-3 text-[15px] ${site.cell}`}>
                    <span className="flex items-center gap-2 whitespace-nowrap text-slate-900">
                      <MapPin size={12} className="shrink-0 text-[#64748b]" />
                      {site.address}
                    </span>
                  </td>
                  <td
                    className={`pr-5 pl-3 text-center font-['Open_Sans',sans-serif] text-[13px] leading-[17px] text-[#757575] ${site.cell}`}
                  >
                    {site.client}
                  </td>
                  <td className={`px-3 ${site.cell}`}>cod</td>
                  <td className={`px-3 ${site.cell}`}>{site.arrived}</td>
                  <td className={`px-3 ${site.cell}`}>-</td>
                  <td className={`px-3 ${site.cell}`}>0</td>
                  <td className={`px-3 ${site.cell}`}>-</td>
                  <td className={`pl-3 ${site.cell}`}>
                    <span className="flex items-center gap-[10px] font-semibold text-slate-900">
                      -
                      <span className="flex h-5 w-11 items-center justify-center rounded border border-green-200 bg-green-50 text-[10px] font-bold text-[#15803d]">
                        Open
                      </span>
                    </span>
                  </td>
                  <td className={`pl-[30px] ${site.cell}`}>
                    <button type="button" aria-label={`Edit site ${site.seq}`} className="block">
                      <Pencil size={12} />
                    </button>
                  </td>
                </tr>
              ))}
            </tbody>
          </table>
        </div>
        <span className="absolute right-0 bottom-[50px] h-[66px] w-[6px] rounded-full bg-slate-300" />
        <span className="absolute bottom-0 left-0 h-[6px] w-[95%] rounded-full bg-slate-300" />
      </div>
    </section>
  );
}

function OrdersPanel() {
  return (
    <section className="min-h-0 bg-white px-2 pt-2 pb-2">
      <div className={`${CARD} relative`}>
        <div className="flex h-[51px] shrink-0 items-center border-b border-slate-200 bg-slate-50 px-4">
          <h2 className={`${CARD_TITLE} mr-2`}>Orders (4)</h2>
          <IconButton label="Refresh orders" icon={RefreshCw} />
          <IconButton label="Filter orders" icon={Funnel} />
          <IconButton label="Copy orders" icon={Copy} />
          <PanelSearch placeholder="Search orders" />
        </div>
        <div className="mr-[6px] min-h-0 flex-1 overflow-hidden">
          <table className="w-full table-fixed">
            <colgroup>
              <col className="w-[24px]" />
              <col className="w-[158px]" />
              <col className="w-[92px]" />
              <col className="w-[249px]" />
              <col className="w-[150px]" />
              <col className="w-[97px]" />
              <col className="w-[42px]" />
            </colgroup>
            <thead>
              <tr className="h-8 border-b border-slate-200 bg-slate-50">
                <th aria-label="Reorder" />
                <th className={TH}>Order No</th>
                <th className={TH}>Date</th>
                <th className={TH}>Client</th>
                <th className={TH}>Status</th>
                <th className={TH}>Type</th>
                <th aria-label="Edit" />
              </tr>
            </thead>
            <tbody className="text-sm">
              {ORDERS.map((order) => {
                const delivered = order.status === 'Delivered';
                return (
                  <tr key={order.no} className="h-10 border-b border-slate-200">
                    <td className="pl-1">
                      <GripVertical size={14} className={delivered ? 'text-slate-200' : 'text-slate-300'} />
                    </td>
                    <td className="px-3">
                      <a href={`#${order.no}`} className="text-[15px] font-medium text-[#1e40af]">
                        {order.no}
                      </a>
                    </td>
                    <td />
                    <td className="pl-[15px] font-['Open_Sans',sans-serif] text-[13px] text-[#757575]">
                      {order.client}
                    </td>
                    <td className="px-3">
                      <span
                        className={`inline-flex h-[21px] items-center rounded-full border px-2 text-[10px] font-medium ${
                          delivered
                            ? 'border-green-200 bg-green-50 text-[#15803d]'
                            : 'border-blue-200 bg-[#e8eaf5] text-[#1d4ed8]'
                        }`}
                      >
                        {order.status}
                      </span>
                    </td>
                    <td className="px-3 text-slate-900">-</td>
                    <td className="pl-3">
                      <button
                        type="button"
                        aria-label={`Edit order ${order.no}`}
                        disabled={delivered}
                        className="block text-[#64748b] disabled:text-slate-200"
                      >
                        <Pencil size={14} />
                      </button>
                    </td>
                  </tr>
                );
              })}
            </tbody>
          </table>
        </div>
        <span className="absolute top-[51px] right-0 h-[110px] w-[6px] rounded-full bg-slate-300" />
      </div>
    </section>
  );
}

const TRAY_SELECT = 'h-6 rounded border border-slate-200 bg-white px-[6px] text-[10px] text-[#64748b]';

function UnscheduledTray() {
  return (
    <section className="flex min-h-0 flex-col overflow-hidden border-t border-slate-200 bg-white">
      <div className="flex h-10 shrink-0 items-end border-b border-slate-200 bg-slate-50 pl-4">
        <button
          type="button"
          className="-mb-px flex h-8 items-center gap-[6px] rounded-t-lg border border-b-0 border-slate-200 bg-white px-3 text-[10px] font-semibold text-[#1e40af]"
        >
          UNSCHEDULED
          <span className="rounded-full bg-[#e8eaf8] px-1 py-px">0</span>
        </button>
      </div>
      <div className="flex h-[45px] shrink-0 items-center border-b border-slate-200 bg-slate-50 px-[14px]">
        <IconButton label="Refresh unscheduled" icon={RefreshCw} />
        <span className="mr-[6px] ml-1">
          <IconButton label="Copy unscheduled" icon={Copy} />
        </span>
        <label className="flex h-[25px] min-w-0 flex-1 items-center gap-1 rounded border border-slate-200 bg-white px-2 text-[#64748b]">
          <Search size={12} />
          <input
            type="text"
            aria-label="Search unscheduled orders"
            placeholder="Search orders..."
            className="min-w-0 flex-1 bg-transparent text-[10px] outline-none placeholder:text-[#64748b]"
          />
        </label>
        <span className="mx-[6px]">
          <IconButton label="Filter unscheduled" icon={Funnel} />
        </span>
        <select aria-label="Type" className={`${TRAY_SELECT} mr-2 w-[76px]`}>
          <option>Type</option>
        </select>
        <select aria-label="Depot" className={`${TRAY_SELECT} w-[164px]`}>
          <option>Depot</option>
        </select>
      </div>
      <table className="w-full table-fixed">
        <colgroup>
          <col className="w-[60px]" />
          <col className="w-[156px]" />
          <col className="w-[100px]" />
          <col className="w-[122px]" />
          <col className="w-[147px]" />
          <col className="w-[169px]" />
          <col className="w-[79px]" />
        </colgroup>
        <thead>
          <tr className="h-[30px] border-b border-slate-200 bg-slate-50">
            <th className="pb-1 pl-3 text-left">
              <input type="checkbox" aria-label="Select all unscheduled orders" className="block" />
            </th>
            <th className={TH}>Order No</th>
            <th className={TH}>Date</th>
            <th className={TH}>Client</th>
            <th className={TH}>Address</th>
            <th className={TH}>Weight Kg</th>
            <th className={TH}>Actions</th>
          </tr>
        </thead>
        <tbody>
          <tr>
            <td colSpan={7} className="h-[54px] text-center text-sm text-[#64748b]">
              No unscheduled orders
            </td>
          </tr>
        </tbody>
      </table>
    </section>
  );
}

export default function App() {
  return (
    <div className="flex h-screen overflow-hidden border-t-[3px] border-b border-t-[#4d3642] border-b-[#45453f] bg-white pr-[2px] pl-px font-['Inter',sans-serif]">
      <Sidebar />
      <div className="flex min-w-0 flex-1 flex-col">
        <TopBar />
        <main className="grid min-h-0 flex-1 grid-cols-[836fr_8px_833fr]">
          <div className="grid min-h-0 min-w-0 grid-cols-[minmax(0,1fr)] grid-rows-[273fr_12px_294fr_12px_214fr]">
            <RoutesPanel />
            <SplitHandle />
            <SitesPanel />
            <SplitHandle />
            <OrdersPanel />
          </div>
          <div role="separator" className="bg-white">
            <div className="h-full w-1 rounded-full bg-gray-300" />
          </div>
          <div className="grid min-h-0 min-w-0 grid-cols-[minmax(0,1fr)] grid-rows-[555fr_12px_238fr]">
            <MapPanel />
            <div role="separator" className="flex items-center bg-gray-100">
              <div className="h-1 w-full rounded-full bg-gray-300" />
            </div>
            <UnscheduledTray />
          </div>
        </main>
      </div>
    </div>
  );
}
